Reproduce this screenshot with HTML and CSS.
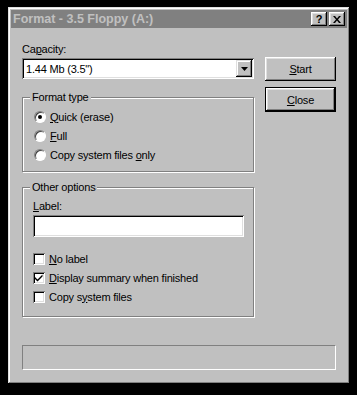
FILE: index.html
```html
<!DOCTYPE html>
<html>

<head>
  <meta charset="utf-8" />
  <link rel="stylesheet" href="styles.css">
</head>

<body>
  <div class="window">
    <div class="titlebar">
      <span class="title">Format - 3.5 Floppy (A:)</span>
      <div class="title-buttons">
        <span class="tbtn help">?</span>
        <span class="tbtn close">
          <svg width="8" height="7" viewBox="0 0 8 7">
            <path d="M0 0h2l2 2.5 2-2.5h2l-3 3.5 3 3.5h-2l-2-2.5-2 2.5h-2l3-3.5z" fill="#000" />
          </svg>
        </span>
      </div>
    </div>
    <div class="content">
      <div class="left">
        <div class="caption">Ca<u>p</u>acity:</div>
        <div class="combo">
          <span class="combo-text">1.44 Mb (3.5")</span>
          <span class="combo-btn">
            <svg width="7" height="4" viewBox="0 0 7 4"><path d="M0 0h7l-3.5 4z" fill="#000" /></svg>
          </span>
        </div>

        <fieldset class="group format-group">
          <legend>Format type</legend>
          <div class="row"><span class="radio checked"></span><span><u>Q</u>uick (erase)</span></div>
          <div class="row"><span class="radio"></span><span><u>F</u>ull</span></div>
          <div class="row"><span class="radio"></span><span>Copy system files <u>o</u>nly</span></div>
        </fieldset>

        <fieldset class="group other-group">
          <legend>Other options</legend>
          <div class="caption"><u>L</u>abel:</div>
          <div class="textbox"></div>
          <div class="checks">
            <div class="row"><span class="check"></span><span><u>N</u>o label</span></div>
            <div class="row"><span class="check checked">
                <svg width="8" height="8" viewBox="0 0 8 8"><path d="M0 3l2.5 2.5 5-5v2l-5 5-2.5-2.5z" fill="#000" /></svg>
              </span><span><u>D</u>isplay summary when finished</span></div>
            <div class="row"><span class="check"></span><span>Copy s<u>y</u>stem files</span></div>
          </div>
        </fieldset>
      </div>
      <div class="right">
        <div class="button"><u>S</u>tart</div>
        <div class="button default"><u>C</u>lose</div>
      </div>
      <div class="status"></div>
    </div>
  </div>
</body>

</html>
```

FILE: styles.css
```css
body {
  margin: 0;
  padding: 0;
  background-color: #000;
  font-family: "Liberation Sans", Arial, sans-serif;
  font-size: 11px;
  letter-spacing: -0.2px;
  color: #000;
}

u {
  text-decoration-thickness: 1px;
  text-underline-offset: 1px;
}

.window {
  width: 342px;
  height: 377px;
  margin: 7px 0 0 8px;
  box-sizing: border-box;
  padding: 3px;
  background-color: #c0c0c0;
  box-shadow: inset -1px -1px #000, inset 1px 1px #dfdfdf, inset -2px -2px #808080, inset 2px 2px #fff;
  display: flex;
  flex-direction: column;
}

.titlebar {
  height: 18px;
  background-color: #808080;
  display: flex;
  align-items: center;
  justify-content: space-between;
  padding: 0 2px 0 2px;
}

.title {
  color: #c0c0c0;
  font-weight: bold;
  font-size: 12.5px;
  letter-spacing: 0;
}

.title-buttons {
  display: flex;
  gap: 2px;
}

.tbtn {
  width: 16px;
  height: 14px;
  box-sizing: border-box;
  background-color: #c0c0c0;
  box-shadow: inset -1px -1px #000, inset 1px 1px #fff, inset -2px -2px #808080, inset 2px 2px #dfdfdf;
  display: flex;
  align-items: center;
  justify-content: center;
}

.tbtn.help {
  font-weight: bold;
  font-size: 11px;
  line-height: 14px;
}

.content {
  flex: 1;
  display: grid;
  grid-template-columns: 232px 71px;
  grid-template-rows: auto 1fr;
  column-gap: 11px;
  padding: 14px 0 0 11px;
}

.caption {
  line-height: 14px;
}

.combo {
  margin-top: 2px;
  height: 21px;
  box-sizing: border-box;
  background-color: #fff;
  box-shadow: inset 1px 1px #808080, inset -1px -1px #fff, inset 2px 2px #000, inset -2px -2px #dfdfdf;
  display: flex;
  align-items: center;
  justify-content: space-between;
  padding: 2px;
}

.combo-text {
  padding-left: 2px;
}

.combo-btn {
  width: 16px;
  height: 17px;
  box-sizing: border-box;
  background-color: #c0c0c0;
  box-shadow: inset -1px -1px #000, inset 1px 1px #dfdfdf, inset -2px -2px #808080, inset 2px 2px #fff;
  display: flex;
  align-items: center;
  justify-content: center;
}

.group {
  margin: 0;
  border: 1px solid #808080;
  box-shadow: 1px 1px 0 #fff, inset 1px 1px 0 #fff;
  padding: 3px 10px 7px 10px;
  min-width: 0;
}

.group legend {
  padding: 0 2px;
  margin-left: -3px;
  line-height: 14px;
  background-color: #c0c0c0;
}

.format-group {
  margin-top: 11px;
}

.other-group {
  margin-top: 8px;
  padding-top: 5px;
  padding-bottom: 10px;
}

.row {
  height: 19px;
  display: flex;
  align-items: center;
  gap: 4px;
}

.radio {
  width: 12px;
  height: 12px;
  border-radius: 50%;
  background-color: #fff;
  box-sizing: border-box;
  border: 1px solid;
  border-color: #808080 #fff #fff #808080;
  box-shadow: inset 1px 1px #404040;
  display: flex;
  align-items: center;
  justify-content: center;
  margin-left: 1px;
}

.radio.checked::after {
  content: "";
  width: 4px;
  height: 4px;
  border-radius: 50%;
  background-color: #000;
}

.textbox {
  margin-top: 2px;
  width: 211px;
  height: 22px;
  box-sizing: border-box;
  background-color: #fff;
  box-shadow: inset 1px 1px #808080, inset -1px -1px #fff, inset 2px 2px #000, inset -2px -2px #dfdfdf;
}

.checks {
  margin-top: 12px;
}

.check {
  width: 12px;
  height: 12px;
  box-sizing: border-box;
  background-color: #fff;
  box-shadow: inset 1px 1px #808080, inset -1px -1px #fff, inset 2px 2px #000, inset -2px -2px #dfdfdf;
  display: flex;
  align-items: center;
  justify-content: center;
}

.right {
  padding-top: 15px;
  display: flex;
  flex-direction: column;
  gap: 6px;
}

.button {
  height: 24px;
  box-sizing: border-box;
  display: flex;
  align-items: center;
  justify-content: center;
  box-shadow: inset -1px -1px #000, inset 1px 1px #fff, inset -2px -2px #808080, inset 2px 2px #dfdfdf;
}

.button.default {
  height: 25px;
  box-shadow: inset 0 0 0 1px #000, inset -2px -2px #000, inset 2px 2px #fff, inset -3px -3px #808080, inset 3px 3px #dfdfdf;
}

.status {
  grid-column: 1 / 3;
  margin-top: 28px;
  width: 314px;
  height: 25px;
  box-sizing: border-box;
  border-top: 1px solid #808080;
  border-left: 1px solid #808080;
  border-right: 1px solid #fff;
  border-bottom: 1px solid #fff;
}
```
